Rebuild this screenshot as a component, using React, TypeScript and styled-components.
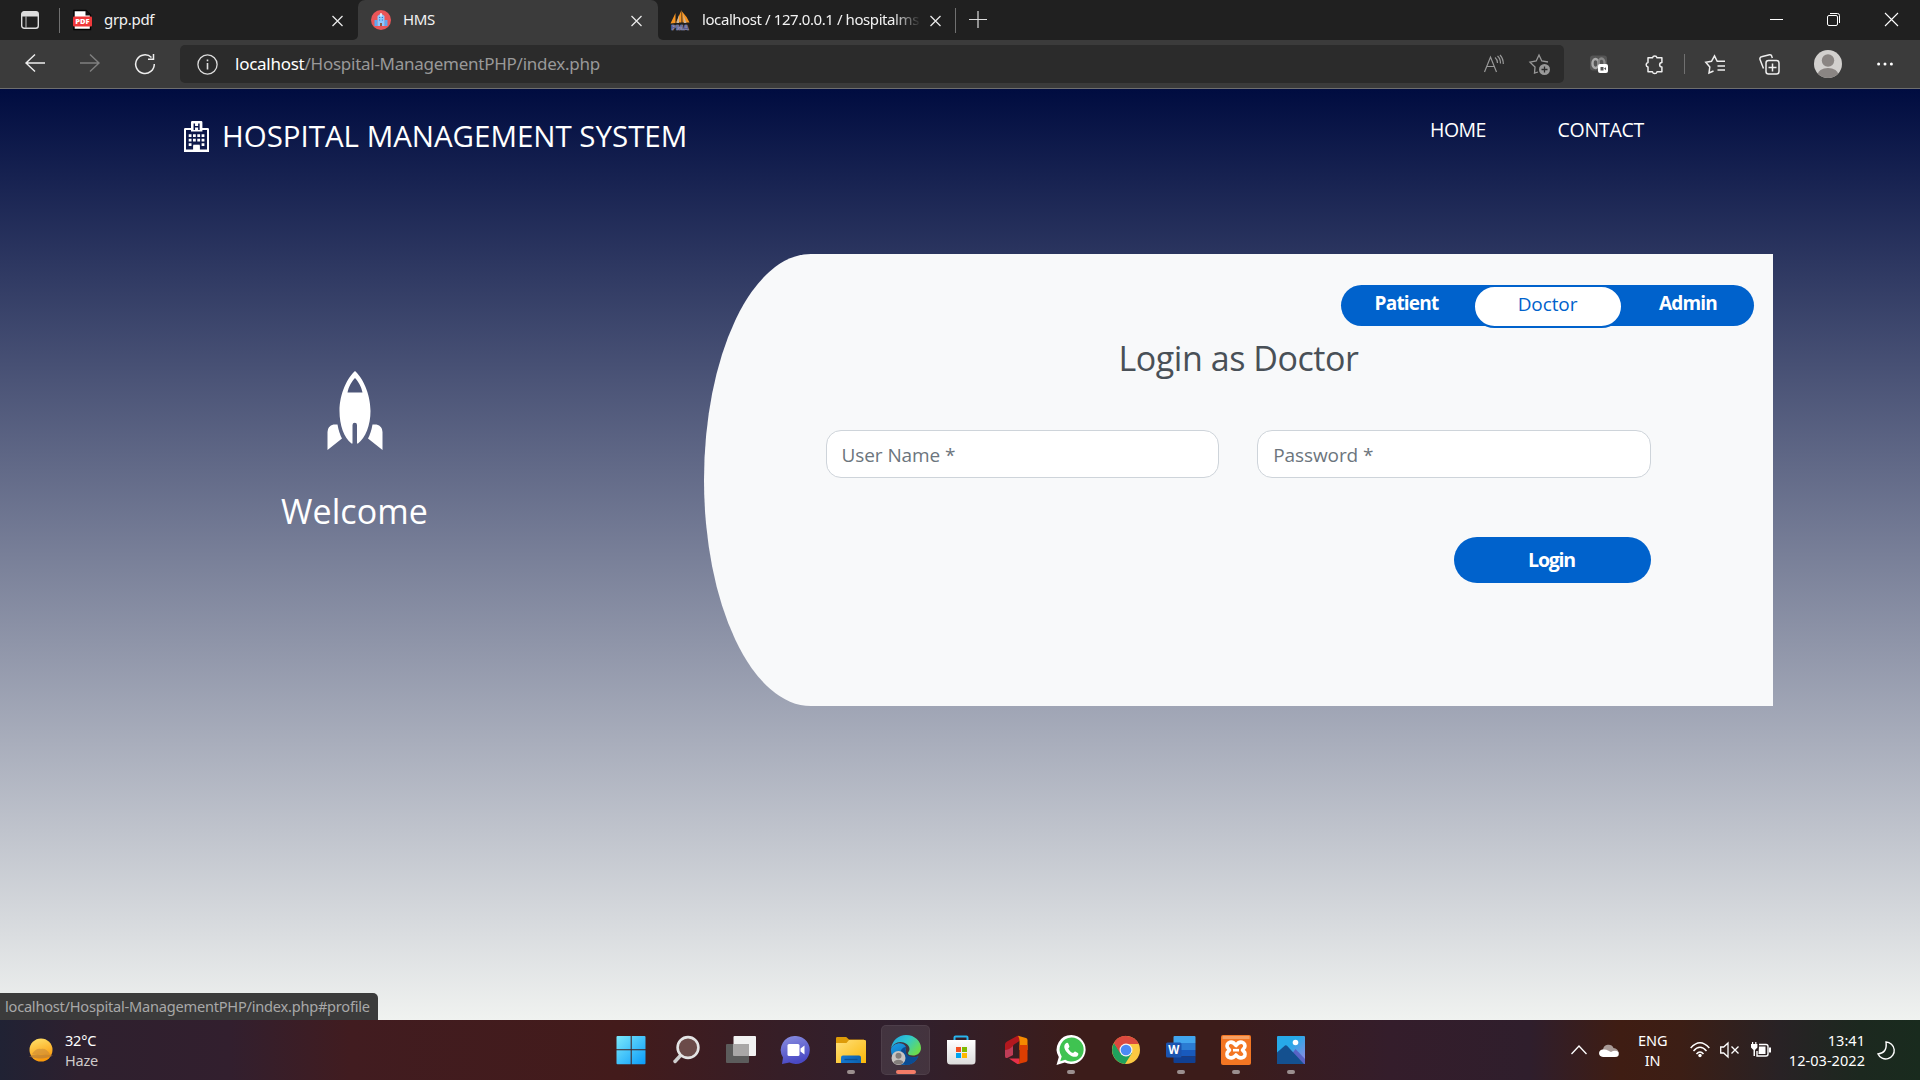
import React from "react";
import styled, { createGlobalStyle } from "styled-components";

const GlobalStyle = createGlobalStyle`
  * { box-sizing: border-box; }
  body { margin: 0; background: #202020; overflow: hidden; }
`;

const uiFont = `"Noto Sans", "Open Sans", sans-serif`;
const siteFont = `"Open Sans", "Noto Sans", sans-serif`;

const Desktop = styled.div`
  width: 1920px;
  height: 1080px;
  display: flex;
  flex-direction: column;
  overflow: hidden;
  font-family: ${uiFont};
`;

/* ---------- Browser chrome ---------- */
const TabBar = styled.div`
  height: 40px;
  flex: none;
  display: flex;
  background: #3b3b3b;
`;
const TabGroup = styled.div<{ $w?: number; $side?: "left" | "right" }>`
  height: 40px;
  display: flex;
  align-items: center;
  background: #202020;
  ${(p) => (p.$w ? `width: ${p.$w}px;` : "flex: 1;")}
  border-radius: ${(p) => (p.$side === "left" ? "0 0 5px 0" : "0 0 0 5px")};
`;
const TabCorner = styled.div`
  background: #202020;
  display: flex;
`;
const ActiveTab = styled.div`
  width: 300px;
  height: 40px;
  display: flex;
  align-items: center;
  background: #3b3b3b;
  border-radius: 7px 7px 0 0;
  padding: 0 16px 0 13px;
`;
const TabTitle = styled.span<{ $w: number; $ls?: number; $fade?: boolean }>`
  width: ${(p) => p.$w}px;
  font-size: 15px;
  line-height: 20px;
  padding-bottom: 2px;
  letter-spacing: ${(p) => p.$ls ?? 0}px;
  color: #f2f2f2;
  white-space: nowrap;
  ${(p) => p.$fade && "mask-image: linear-gradient(90deg, #000 88%, transparent 101%);"}
`;
const Gap = styled.span<{ $w: number }>`
  width: ${(p) => p.$w}px;
  flex: none;
`;
const Grow = styled.span`
  flex: 1;
`;
const Divider = styled.span<{ $h: number }>`
  width: 1px;
  height: ${(p) => p.$h}px;
  background: #707070;
  flex: none;
`;
const Icon = styled.svg`
  display: block;
  flex: none;
  overflow: visible;
`;
const WindowButtons = styled.div`
  display: flex;
  align-items: center;
  padding: 0 22px 1px 0;
`;
const Toolbar = styled.div`
  height: 49px;
  flex: none;
  display: flex;
  align-items: center;
  background: #3b3b3b;
  border-bottom: 1px solid #6e6e6e;
`;
const Address = styled.div`
  width: 1384px;
  height: 38px;
  border-radius: 5px;
  background: #2b2b2b;
  display: flex;
  align-items: center;
  padding: 0 14px 0 17px;
`;
const Url = styled.span`
  font-size: 17px;
  line-height: 24px;
  letter-spacing: -0.26px;
  color: #999;
  white-space: nowrap;
  b { font-weight: 400; color: #fff; }
`;

/* ---------- Web page ---------- */
const Site = styled.div`
  height: 931px;
  flex: none;
  display: flex;
  flex-direction: column;
  font-family: ${siteFont};
  background: linear-gradient(180deg, #000c40, #f0f2f0);
`;
const SiteNav = styled.header`
  height: 165px;
  flex: none;
  display: flex;
  align-items: flex-start;
  padding: 25px 276px 0 184px;
  color: #fff;
`;
const Brand = styled.div`
  display: flex;
  align-items: center;
  gap: 13px;
`;
const BrandName = styled.span`
  font-size: 29.5px;
  line-height: 44px;
  letter-spacing: -0.02px;
  white-space: nowrap;
`;
const NavLinks = styled.nav`
  margin: 1px 0 0 auto;
  display: flex;
  justify-content: space-between;
  width: 214px;
`;
const NavLink = styled.a<{ $ls: number }>`
  font-size: 19.5px;
  line-height: 30px;
  letter-spacing: ${(p) => p.$ls}px;
  color: #fff;
`;
const Main = styled.main`
  display: flex;
  padding-left: 152px;
`;
const Welcome = styled.section`
  width: 405px;
  display: flex;
  flex-direction: column;
  align-items: center;
  padding-top: 117px;
  margin-right: 147px;
  color: #fff;
`;
const WelcomeTitle = styled.h3`
  margin: 40px 0 0;
  font-size: 34px;
  line-height: 42px;
  font-weight: 400;
  letter-spacing: 0.1px;
`;
const Card = styled.section`
  width: 1069px;
  height: 452px;
  background: #f8f9fa;
  border-top-left-radius: 10% 50%;
  border-bottom-left-radius: 10% 50%;
  padding-top: 31px;
  display: flex;
  flex-direction: column;
`;
const RoleTabs = styled.div`
  align-self: flex-end;
  width: 413px;
  height: 41px;
  margin-right: 19px;
  display: flex;
  background: #0062cc;
  border-radius: 20.5px;
`;
const RoleTab = styled.button<{ $active?: boolean; $w: number }>`
  width: ${(p) => p.$w}px;
  height: ${(p) => (p.$active ? 43 : 38)}px;
  padding: 0 1px ${(p) => (p.$active ? 5 : 2)}px 0;
  border: ${(p) => (p.$active ? "2px solid #0062cc" : "0")};
  border-radius: 22px;
  background: ${(p) => (p.$active ? "#fff" : "transparent")};
  color: ${(p) => (p.$active ? "#0062cc" : "#fff")};
  font-family: inherit;
  font-size: 19px;
  font-weight: ${(p) => (p.$active ? 500 : 700)};
  letter-spacing: ${(p) => (p.$active ? -0.1 : -0.8)}px;
`;
const CardTitle = styled.h3`
  margin: 10px 0 0;
  align-self: center;
  font-size: 34px;
  line-height: 44px;
  font-weight: 400;
  letter-spacing: -0.45px;
  color: #495057;
`;
const Fields = styled.div`
  display: flex;
  gap: 37.75px;
  margin: 50px 122px 0 121.5px;
`;
const Field = styled.input`
  flex: 1;
  min-width: 0;
  height: 48px;
  border: 1px solid #ced4da;
  border-radius: 15px;
  padding: 1px 15px 0;
  background: #fff;
  font-family: inherit;
  font-size: 19px;
  letter-spacing: -0.08px;
  &::placeholder { color: #6c757d; opacity: 1; }
`;
const LoginButton = styled.button`
  align-self: flex-end;
  margin: 59px 122px 0 0;
  width: 197px;
  height: 46px;
  padding: 0 2px 1px 0;
  border: 0;
  border-radius: 23px;
  background: #0062cc;
  color: #fff;
  font-family: inherit;
  font-size: 19.5px;
  font-weight: 700;
  letter-spacing: -1.2px;
`;
const StatusBubble = styled.div`
  margin-top: auto;
  align-self: flex-start;
  width: 378px;
  height: 27px;
  padding-left: 5px;
  background: #3b3b3b;
  border-radius: 0 5px 0 0;
  font-family: ${uiFont};
  font-size: 14.6px;
  line-height: 26px;
  letter-spacing: -0.23px;
  color: #a8a8a8;
  white-space: nowrap;
`;

/* ---------- Taskbar ---------- */
const Taskbar = styled.footer`
  height: 60px;
  flex: none;
  display: flex;
  align-items: center;
  color: #fff;
  background: linear-gradient(90deg, #202234 0, #2e202e 80px, #321f2e 230px, #411c20 350px, #431b1b 620px,
    #361e27 780px, #30202e 900px, #3c1c1a 1080px, #3c1c1a 1220px, #341d2b 1390px, #2f1e2c 1530px, #3f1d13 1620px,
    #3c1e15 1680px, #282225 1780px, #1c281f 1860px, #192b1e 1920px);
`;
const Weather = styled.div`
  width: 586px;
  padding-left: 28px;
  display: flex;
  align-items: center;
  gap: 11px;
`;
const TwoLines = styled.div<{ $align?: string; $w?: number; $ls?: number; $dim?: boolean }>`
  font-size: 14.5px;
  line-height: 20px;
  padding-bottom: 1px;
  letter-spacing: ${(p) => p.$ls ?? 0}px;
  text-align: ${(p) => p.$align ?? "left"};
  ${(p) => (p.$w ? `width: ${p.$w}px;` : "")}
  white-space: nowrap;
  div + div { ${(p) => (p.$dim ? "color: #cfcaca;" : "")} }
`;
const Apps = styled.div`
  display: flex;
  gap: 6px;
  margin-left: 20px;
`;
const AppButton = styled.div<{ $active?: boolean }>`
  width: 49px;
  height: 50px;
  border-radius: 5px;
  display: flex;
  flex-direction: column;
  align-items: center;
  padding-top: 10px;
  ${(p) => p.$active && "background: rgba(255,255,255,.09); box-shadow: inset 0 0 0 1px rgba(255,255,255,.06);"}
`;
const Running = styled.span<{ $active?: boolean }>`
  width: ${(p) => (p.$active ? 20 : 8)}px;
  height: 4px;
  border-radius: 2px;
  margin-top: 5px;
  background: ${(p) => (p.$active ? "#f37c68" : "#9b8f8f")};
`;
const Tray = styled.div`
  margin-left: auto;
  display: flex;
  align-items: center;
  padding-right: 26px;
`;

const TabClose = () => (
  <Icon width="11" height="11" viewBox="0 0 11 11" stroke="#e8e8e8" strokeWidth="1.3">
    <path d="M.5 1 10.5 11M10.5 1 .5 11" />
  </Icon>
);

const apps: { id: string; running?: boolean; active?: boolean; art: React.ReactNode }[] = [
  {
    id: "start",
    art: (
      <>
        <path fill="url(#win)" d="M1.5 1h13.2v13.2H.5V2a1 1 0 0 1 1-1zM15.7 1h12.8a1 1 0 0 1 1 1v12.2H15.7zM.5 15.2h14.2v14H1.5a1 1 0 0 1-1-1zM15.7 15.2h13.8v13a1 1 0 0 1-1 1H15.7z" />
      </>
    ),
  },
  {
    id: "search",
    art: (
      <>
        <path d="M9.500 20.500 4 26.500" stroke="#cfcfcf" strokeWidth="3.500" strokeLinecap="round" />
        <circle cx="17" cy="12.500" r="10.400" fill="#6b4b49" stroke="#e4e4e4" strokeWidth="2.600" />
      </>
    ),
  },
  {
    id: "taskview",
    art: (
      <>
        <rect x="0" y="9" width="23" height="19" rx="1" fill="#5c5c5c" />
        <rect x="7.500" y="1" width="22.500" height="20" rx="1" fill="#f2f2f2" />
        <rect x="7.500" y="9" width="15.500" height="12" fill="#a9a7a7" />
      </>
    ),
  },
  {
    id: "chat",
    art: (
      <>
        <path fill="url(#chat)" d="M15 1a14 14 0 1 1-6.500 26.500L1 29l1-6.500A14 14 0 0 1 15 1z" />
        <rect x="6.500" y="9" width="12" height="12" rx="1.500" fill="#fff" />
        <path fill="#fff" d="m19.500 13.500 4-3v9l-4-3z" />
      </>
    ),
  },
  {
    id: "files",
    running: true,
    art: (
      <>
        <path fill="#dd9b08" d="M0 3.200a1.200 1.200 0 0 1 1.200-1.200h9L13 4.500h15v6H0z" />
        <path fill="url(#folder)" d="M0 8h10.500L13 5h15.800A1.200 1.200 0 0 1 30 6.200V28H0z" />
        <path fill="url(#drawer)" d="M5 28v-5.500a2 2 0 0 1 2-2h16a2 2 0 0 1 2 2V28z" />
        <path stroke="#0b4f93" strokeWidth="1.300" d="M8.500 24.500h13" />
      </>
    ),
  },
  {
    id: "edge",
    running: true,
    active: true,
    art: (
      <>
        <path fill="url(#edgeBase)" d="M0 14C2 9 8 7 12 9c4 2 3 5 2.500 7-.5 5 6 8.500 13 5C25 27 20 30 14.500 30 6 30-.5 23 0 14z" />
        <path fill="#0b4c93" d="M9.500 17c1-4 3.500-5 6-5-2 3-1 8 4 9.800 3 1 6 .2 8-.8C25 27 20 30 14.500 30c-4-2-6.500-7-5-13z" />
        <path fill="url(#edgeWave)" d="M0 14C1 5.500 7.500 0 15 0c9 0 15 6.500 15 13 0 5-4 7.500-8 7.500-3 0-5-1-5-2.300s1.500-1.700 1.500-4.200C18.500 10 14 7 9.500 7 5 7 1.500 10 0 14z" />
        <circle cx="7.500" cy="23" r="7" fill="#c9c5c2" />
        <circle cx="7.500" cy="20.800" r="3" fill="#837e7b" />
        <path fill="#837e7b" d="M2.500 27.500a5.300 4 0 0 1 10 0 7 7 0 0 1-10 0z" />
      </>
    ),
  },
  {
    id: "store",
    art: (
      <>
        <path d="M8.500 6V2.500a1 1 0 0 1 1-1h11a1 1 0 0 1 1 1V6" fill="none" stroke="#28b5ee" strokeWidth="2" />
        <path fill="url(#bag)" d="M1 5h28.500v21a3.500 3.500 0 0 1-3.500 3.500H4.500A3.500 3.500 0 0 1 1 26z" />
        <path fill="#f25022" d="M10 12h5v5h-5z" />
        <path fill="#7fba00" d="M16 12h5v5h-5z" />
        <path fill="#00a4ef" d="M10 18h5v5h-5z" />
        <path fill="#ffb900" d="M16 18h5v5h-5z" />
      </>
    ),
  },
  {
    id: "office",
    art: (
      <>
        <path fill="#b3181e" d="M4 9.500q0-2 2-3L16.500.800 18.500 1v5L13 9.500q-1 .5-1 2V20l-6 3q-2 .5-2-2z" />
        <path fill="#c5577d" d="M4 15q4 0 8-4v9l-6 3q-2 .5-2-2z" opacity=".6" />
        <path fill="#e8304a" d="M8 23.500h10.500v5.300q-1.500.6-3-.3z" />
        <path fill="#f58a00" d="m17 .800 8 2.200q1.500.5 1.500 2V15h-8V6q0-3-1.500-5.200z" />
        <path fill="#dc3e02" d="M18.500 10h8v15q0 1.500-1.500 2l-8 2q1.500-1.500 1.500-5z" />
      </>
    ),
  },
  {
    id: "whatsapp",
    running: true,
    art: (
      <>
        <path fill="#fff" d="M15.500 0a14.500 14.500 0 1 1-6.800 27.500L.500 30l2.300-8A14.500 14.500 0 0 1 15.500 0z" />
        <path fill="#3fc351" d="M15.500 2.600a12 12 0 1 1-6.300 22.100L4.200 26.200l1.500-4.800A12 12 0 0 1 15.500 2.600z" />
        <path fill="#fff" d="M9.700 8.500c1-1 2.300-.8 2.700.2l1 2.500c.3.800-.8 1.700-1.200 2.200 1.100 2.300 2.800 3.800 5 4.700.6-.5 1.300-1.700 2-1.500l2.700 1.300c1 .5.300 2.600-.7 3.300-2 1.400-5.500.5-8.700-2.300-3.900-3.400-5.700-7.900-2.800-10.400z" />
      </>
    ),
  },
  {
    id: "chrome",
    art: (
      <g transform="translate(1 1)">
        <circle cx="14" cy="14" r="14" fill="#fbc842" />
        <path fill="#1fa15d" d="M2 7a14 14 0 0 0 11 21l7-11H9z" />
        <path fill="#db4a3f" d="M1.900 7a14 14 0 0 1 24.900 1H14l-6 9z" />
        <circle cx="14" cy="14" r="6.500" fill="#f3f3f3" />
        <circle cx="14" cy="14" r="5.300" fill="#4a8af4" />
      </g>
    ),
  },
  {
    id: "word",
    running: true,
    art: (
      <>
        <path fill="#41a5ee" d="M7.500 2a1 1 0 0 1 1-1H28.500a1 1 0 0 1 1 1v6H7.500z" />
        <path fill="#2b7cd3" d="M7.500 8h22v7h-22z" />
        <path fill="#185abd" d="M7.500 15h22v6.500h-22z" />
        <path fill="#103f91" d="M7.500 21.500h22V27a1 1 0 0 1-1 1H8.500a1 1 0 0 1-1-1z" />
        <rect y="7.500" width="15.500" height="15" rx="1.500" fill="#1b54b0" />
        <text x="7.800" y="19" textAnchor="middle" fill="#fff" fontFamily="Open Sans, sans-serif" fontSize="11.500" fontWeight="700">W</text>
      </>
    ),
  },
  {
    id: "xampp",
    running: true,
    art: (
      <>
        <rect width="30" height="30" rx="2" fill="#f37623" />
        <rect x="1.500" y="1" width="27" height="3" fill="#f6a064" />
        <path fill="none" stroke="#fff" strokeWidth="3.600" strokeLinejoin="round" d="M15 10.500Q12.500 6.500 9 7.200 5 8.500 6.500 12.500L8.500 15 6.300 17.500Q4.800 21.500 9 22.800 12.500 23.500 15 20 17.500 23.500 21 22.800 25.200 21.500 23.700 17.500L21.500 15 23.500 12.500Q25 8.500 21 7.200 17.500 6.500 15 10.500z" />
        <path stroke="#fff" strokeWidth="2.600" d="M12 15.200h6" />
      </>
    ),
  },
  {
    id: "photos",
    running: true,
    art: (
      <>
        <rect x="1" y="1" width="28" height="28" rx="1" fill="url(#sky)" />
        <path fill="#5864c5" d="M13 23 19.500 14 29 24v5H13z" />
        <path fill="#14508f" d="M1 17.500 9 10.500q1-.6 2 .2L28 29H1z" />
        <circle cx="19.500" cy="7.500" r="2.800" fill="#fff" />
      </>
    ),
  },
];

export default function App() {
  return (
    <Desktop>
      <GlobalStyle />
      <Icon width="0" height="0" style={{ position: "absolute" }}>
        <defs>
          <linearGradient id="win" x2="1" y2="1"><stop stopColor="#7be9fb" /><stop offset="1" stopColor="#0a9bfa" /></linearGradient>
          <linearGradient id="chat" x2="0.3" y2="1"><stop stopColor="#8a8fe0" /><stop offset="1" stopColor="#4a49c4" /></linearGradient>
          <linearGradient id="folder" x2="1" y2="1"><stop stopColor="#ffe07a" /><stop offset="1" stopColor="#f9b708" /></linearGradient>
          <linearGradient id="drawer" x2="1"><stop stopColor="#1577cf" /><stop offset="1" stopColor="#0c61af" /></linearGradient>
          <linearGradient id="edgeBase" x2=".6" y2="1"><stop stopColor="#1b9de2" /><stop offset="1" stopColor="#0b62b5" /></linearGradient>
          <linearGradient id="edgeWave" x2="1" y2=".6"><stop stopColor="#1f9fe0" /><stop offset=".5" stopColor="#2fc8cf" /><stop offset="1" stopColor="#6bdc4e" /></linearGradient>
          <linearGradient id="bag" x2="0" y2="1"><stop stopColor="#fff" /><stop offset="1" stopColor="#dcdcdc" /></linearGradient>
          <linearGradient id="sky" x2="1" y2="1"><stop offset=".4" stopColor="#27a9e8" /><stop offset="1" stopColor="#9c86e0" /></linearGradient>
          <linearGradient id="sun" x2="0.3" y2="1"><stop stopColor="#ffe36c" /><stop offset="1" stopColor="#fb9a0c" /></linearGradient>
        </defs>
      </Icon>

      <TabBar>
        <TabGroup $w={358} $side="left">
          <Gap $w={21} />
          <Icon width="18" height="18" viewBox="0 0 18 18" fill="none">
            <rect x=".7" y=".7" width="16.600" height="16.600" rx="2.500" stroke="#ddd" strokeWidth="1.400" />
            <path d="M1 2.500a2 2 0 0 1 2-2h12a2 2 0 0 1 2 2V5.500H1z" fill="#ddd" />
            <path d="M5 5v12" stroke="#aaa" strokeWidth="1.200" />
          </Icon>
          <Gap $w={20} />
          <Divider $h={25} />
          <Gap $w={13} />
          <Icon width="19" height="20" viewBox="0 0 19 20">
            <path d="M1 .500h12L17.500 5v14.500H1z" fill="#fff" stroke="#000" strokeWidth="1.400" />
            <path d="M12.500 0v5.500h5.500z" fill="#111" />
            <rect y="6.500" width="19" height="10" rx="1" fill="#f0393b" />
            <text x="9.500" y="14.200" textAnchor="middle" fill="#fff" fontFamily="Open Sans, sans-serif" fontSize="7.500" fontWeight="800">PDF</text>
          </Icon>
          <Gap $w={12} />
          <TabTitle $w={228} $ls={-0.3}>grp.pdf</TabTitle>
          <TabClose />
        </TabGroup>
        <TabCorner>
          <ActiveTab>
            <Icon width="20" height="20" viewBox="0 0 20 20">
              <circle cx="10" cy="10" r="10" fill="#ea5558" />
              <path d="M3.500 10h3v6h-3zM13.500 10h3v6h-3z" fill="#5fa8f0" />
              <path d="M6.500 6 10 3.500 13.500 6v10h-7z" fill="#8fc8ff" />
              <path d="M8 7h1.200v1H8zm2.800 0H12v1h-1.200zM8 9.500h1.200v1H8zm2.800 0H12v1h-1.200z" fill="#2f78d0" />
              <path d="M9.400 3h1.200v3.500H9.400z" fill="#fff" />
              <path d="M9 13h2v3H9z" fill="#8b5a4a" />
            </Icon>
            <Gap $w={12} />
            <TabTitle $w={228} $ls={-0.4}>HMS</TabTitle>
            <TabClose />
          </ActiveTab>
        </TabCorner>
        <TabGroup $side="right">
          <Gap $w={12} />
          <Icon width="20" height="20" viewBox="0 0 20 20">
            <path d="M5.500 3v10L.500 13.500zM11.500 0v12.500H6zM12 1.500q5 5 7.500 11H12.500z" fill="#f79420" />
            <path d="M9 5v8H6.500zM13 4l3.500 9H14z" fill="#c8b49c" />
            <text x="10" y="19.500" textAnchor="middle" fill="#4a4a80" stroke="#a9a9cf" strokeWidth=".5" fontFamily="Open Sans, sans-serif" fontSize="7.500" fontWeight="800">PMA</text>
          </Icon>
          <Gap $w={12} />
          <TabTitle $w={217} $ls={-0.42} $fade>localhost / 127.0.0.1 / hospitalms</TabTitle>
          <Gap $w={11} />
          <TabClose />
          <Gap $w={14} />
          <Divider $h={25} />
          <Gap $w={13} />
          <Icon width="18" height="18" viewBox="0 0 18 18" stroke="#ddd" strokeWidth="1.200">
            <path d="M0 8.500h18M9 0v17" />
          </Icon>
          <Grow />
          <WindowButtons>
            <Icon width="13" height="13" viewBox="0 0 13 13" stroke="#fff" strokeWidth="1">
              <path d="M0 6.500h13" />
            </Icon>
            <Gap $w={44} />
            <Icon width="13" height="13" viewBox="0 0 13 13" stroke="#fff" fill="none">
              <rect x=".5" y="2.500" width="10" height="10" rx="1.500" />
              <path d="M3 .500h7.500a2 2 0 0 1 2 2V10" />
            </Icon>
            <Gap $w={45} />
            <Icon width="13" height="13" viewBox="0 0 13 13" stroke="#fff" strokeWidth="1.100">
              <path d="M0 0 13 13M13 0 0 13" />
            </Icon>
          </WindowButtons>
        </TabGroup>
      </TabBar>

      <Toolbar>
        <Gap $w={25} />
        <Icon width="20" height="20" viewBox="0 0 20 20" stroke="#eee" strokeWidth="1.400" fill="none">
          <path d="M20 9H1M10 .500 1 9l9 8.500" />
        </Icon>
        <Gap $w={35} />
        <Icon width="20" height="20" viewBox="0 0 20 20" stroke="#808080" strokeWidth="1.400" fill="none">
          <path d="M0 9h19M10 .500 19 9l-9 8.500" />
        </Icon>
        <Gap $w={35} />
        <Icon width="20" height="20" viewBox="0 0 20 20" stroke="#eee" strokeWidth="1.500" fill="none">
          <path d="M16.500 3.500A9.300 9.300 0 1 0 19.300 10M18.500 0v5.300H13" />
        </Icon>
        <Gap $w={25} />
        <Address>
          <Icon width="21" height="21" viewBox="0 0 21 21" stroke="#ddd" strokeWidth="1.300" fill="none">
            <circle cx="10.500" cy="10.500" r="9.600" />
            <path d="M10.500 9v6.500M10.500 5.500v1.800" strokeWidth="1.600" />
          </Icon>
          <Gap $w={17} />
          <Url><b>localhost</b>/Hospital-ManagementPHP/index.php</Url>
          <Grow />
          <Icon width="20" height="18" viewBox="0 0 20 18" stroke="#999" strokeWidth="1.200" fill="none">
            <path d="M.500 17 6.500 2l6 15M3 11.500h7.500M11 2.500q2.500 2 2.500 5.500M13.500 1q3 2.500 3 7.500M16 0q3.300 3.500 3.300 9" />
          </Icon>
          <Gap $w={25} />
          <Icon width="21" height="21" viewBox="0 0 21 21" stroke="#999" strokeWidth="1.300" fill="none">
            <path d="M9 18l-3.500 1 .5-6L1 8.200l6.200-1.200L10 1l2.800 6L19 8" />
            <circle cx="15.500" cy="15.500" r="5.500" fill="#999" stroke="none" />
            <path d="M15.500 12.500v6M12.500 15.500h6" stroke="#2b2b2b" />
          </Icon>
        </Address>
        <Gap $w={26} />
        <Icon width="18" height="18" viewBox="0 0 18 18">
          <rect width="17" height="15" y=".500" rx="3" fill="#555" />
          <ellipse cx="5.500" cy="8.500" rx="3" ry="4.500" fill="none" stroke="#aaa" strokeWidth="2.400" />
          <ellipse cx="11.500" cy="8" rx="3" ry="4.500" fill="none" stroke="#888" strokeWidth="2.400" />
          <rect x="8" y="9" width="10" height="9" rx="2" fill="#fff" />
          <path d="M10.500 12h3v3.500h-3zM14 13.500l2-1.200v3z" fill="#555" />
        </Icon>
        <Gap $w={37} />
        <Icon width="18" height="19" viewBox="0 0 18 19" stroke="#eee" strokeWidth="1.500" fill="none" strokeLinejoin="round">
          <path d="M3 2.800h4.500a2.300 2.300 0 0 1 4.500 0h4.900v4.700a2.200 2.200 0 1 0 0 4.500v4.800H12a2.300 2.300 0 0 1-4.500 0H3V12a2.300 2.300 0 0 1 0-4.500z" />
        </Icon>
        <Gap $w={21} />
        <Divider $h={20} />
        <Gap $w={20} />
        <Icon width="20" height="19" viewBox="0 0 20 19" stroke="#eee" strokeWidth="1.500" fill="none">
          <path d="M8.500 16 4 18l.8-6L.800 7.300l5.700-1L9.500.800l2.700 5.500H20M12.500 11H20M12.500 15H20" />
        </Icon>
        <Gap $w={34} />
        <Icon width="21" height="21" viewBox="0 0 21 21" stroke="#eee" strokeWidth="1.500" fill="none">
          <path d="M4.500 14.500 1 5.500a2 2 0 0 1 1.500-2.700l8-2a2 2 0 0 1 2.300 1.500l.5 1.700" />
          <rect x="7" y="6.500" width="13" height="13.500" rx="2.500" />
          <path d="M13.500 9.500v8M9.500 13.500h8" />
        </Icon>
        <Gap $w={34} />
        <Icon width="28" height="28" viewBox="0 0 28 28">
          <clipPath id="face"><circle cx="14" cy="14" r="14" /></clipPath>
          <circle cx="14" cy="14" r="14" fill="#d2d0ce" />
          <circle cx="14" cy="10.500" r="6.200" fill="#8a8583" />
          <ellipse cx="14" cy="25" rx="10.500" ry="7" fill="#8a8583" clipPath="url(#face)" />
        </Icon>
        <Gap $w={35} />
        <Icon width="16" height="4" viewBox="0 0 16 4" fill="#fff">
          <circle cx="1.600" cy="2" r="1.500" /><circle cx="8" cy="2" r="1.500" /><circle cx="14.400" cy="2" r="1.500" />
        </Icon>
      </Toolbar>

      <Site>
        <SiteNav>
          <Brand>
            <Icon width="25" height="31" viewBox="0 0 25 31" fill="#fff">
              <path fillRule="evenodd" d="M1.300 7H7V1.200Q7 0 8.200 0h9Q18.400 0 18.400 1.200V7h5.300Q25 7 25 8.300V31H0V8.300Q0 7 1.300 7zM2 9v19.500h7.300V24.500h6.400v4H23V9h-4.600v1.500H7V9z" />
              <path fill="none" stroke="#0a154a" strokeWidth="1.500" d="M10.300 2.500v6.500M14.900 2.500v6.500M10.300 5.800h4.600" />
              <path d="M4.700 13.300h2.800V16H4.700zM9 13.300h2.800V16H9zM13.300 13.300h2.800V16h-2.800zM17.600 13.300h2.800V16h-2.800zM4.700 17.800h2.800v2.700H4.700zM9 17.800h2.800v2.700H9zM13.300 17.800h2.800v2.700h-2.800zM17.600 17.800h2.800v2.700h-2.800zM4.700 22.300h2.800V25H4.700zM17.600 22.300h2.800V25h-2.800z" />
              <path d="M9.300 31v-7.300h6.400V31z" />
            </Icon>
            <BrandName>HOSPITAL MANAGEMENT SYSTEM</BrandName>
          </Brand>
          <NavLinks>
            <NavLink $ls={-0.5}>HOME</NavLink>
            <NavLink $ls={-0.25}>CONTACT</NavLink>
          </NavLinks>
        </SiteNav>
        <Main>
          <Welcome>
            <Icon width="56" height="79" viewBox="0 0 56 79" fill="#fff">
              <path fillRule="evenodd" d="M28 0C21 6 12.500 22 12.500 40c0 14 4.500 27 12 32.500h1V54a2 2 0 0 1 4.500 0v18.500h1C38.500 67 43.500 54 43.500 40 43.500 22 35 6 28 0zM28 7c3 3 6.500 9 7.500 14.500h-15C21.500 16 25 10 28 7z" />
              <path d="M10.500 53.500Q12 62 15 67.500L.500 79V61q0-6 6-7.500zM45.500 53.500Q44 62 41 67.500L55.500 79V61q0-6-6-7.500z" />
            </Icon>
            <WelcomeTitle>Welcome</WelcomeTitle>
          </Welcome>
          <Card>
            <RoleTabs>
              <RoleTab $w={132}>Patient</RoleTab>
              <RoleTab $w={150} $active>Doctor</RoleTab>
              <RoleTab $w={131}>Admin</RoleTab>
            </RoleTabs>
            <CardTitle>Login as Doctor</CardTitle>
            <Fields>
              <Field placeholder="User Name *" />
              <Field type="password" placeholder="Password *" />
            </Fields>
            <LoginButton>Login</LoginButton>
          </Card>
        </Main>
        <StatusBubble>localhost/Hospital-ManagementPHP/index.php#profile</StatusBubble>
      </Site>

      <Taskbar>
        <Weather>
          <Icon width="26" height="24" viewBox="0 0 26 24">
            <circle cx="13" cy="12" r="11.500" fill="url(#sun)" />
            <path d="M4 16q4-6 9-5 5-1 9 5z" fill="#c98a3a" opacity=".6" />
            <path d="M1 18.500q4-3 12-2 8-1 12 1-3 2-11 3-8 0-13-2z" fill="#a8753f" opacity=".55" />
          </Icon>
          <TwoLines $dim $ls={-0.2}><div>32°C</div><div>Haze</div></TwoLines>
        </Weather>
        <Apps>
          {apps.map((a) => (
            <AppButton key={a.id} $active={a.active}>
              <Icon width="30" height="30" viewBox="0 0 30 30" fill="none">{a.art}</Icon>
              {a.running && <Running $active={a.active} />}
            </AppButton>
          ))}
        </Apps>
        <Tray>
          <Icon width="16" height="10" viewBox="0 0 16 10" stroke="#fff" strokeWidth="1.300" fill="none">
            <path d="M.500 9 8 1l7.500 8" />
          </Icon>
          <Gap $w={12} />
          <Icon width="20" height="13" viewBox="0 0 20 13">
            <path d="M4 5.500A5.500 5.500 0 0 1 14.500 4Q19 4.500 19.500 8.500L10 11 1 9q0-3 3-3.500z" fill="#a89a96" />
            <path d="M4 5.500q3-.5 5 1l3 1.500q4-2.500 7.500 0Q21 13 16 13H4Q0 12.500 0 9q.5-3.500 4-3.500z" fill="#fff" />
          </Icon>
          <Gap $w={19} />
          <TwoLines $align="center" $w={29} $ls={-0.1}><div>ENG</div><div>IN</div></TwoLines>
          <Gap $w={23} />
          <Icon width="20" height="16" viewBox="0 0 20 16" stroke="#fff" strokeWidth="1.500" fill="none">
            <path d="M.700 6q9.300-10.500 18.600 0M3.500 9q6.500-7.500 13 0M6.500 12q3.500-4 7 0" />
            <circle cx="10" cy="13.500" r="1.700" fill="#fff" stroke="none" />
          </Icon>
          <Gap $w={10} />
          <Icon width="20" height="16" viewBox="0 0 20 16" stroke="#fff" strokeWidth="1.300" fill="none">
            <path d="M.700 5h3L8 1v14l-4.300-4h-3zM11.500 4.500l7 7M18.500 4.500l-7 7" />
          </Icon>
          <Gap $w={11} />
          <Icon width="20" height="16" viewBox="0 0 20 16" fill="none">
            <path d="M8 2.500h7a2 2 0 0 1 2 2v7.500a2 2 0 0 1-2 2H6V9" stroke="#fff" strokeWidth="1.400" />
            <path d="M8 4.500h6.500v7.500H7.500zM18 5.500h2v5h-2zM0 2h1V0h1.200v2h2V0h1.200v2h1v3.500L4 8v6H2.500V8L0 5.500z" fill="#fff" />
          </Icon>
          <Gap $w={14} />
          <TwoLines $align="right" $w={80} $ls={0.05}><div>13:41</div><div>12-03-2022</div></TwoLines>
          <Gap $w={12} />
          <Icon width="17" height="19" viewBox="0 0 17 19" fill="none" stroke="#fff" strokeWidth="1.400">
            <path d="M9 1a8.500 8.500 0 1 1-8 12Q10.500 12 9 1z" />
          </Icon>
        </Tray>
      </Taskbar>
    </Desktop>
  );
}
